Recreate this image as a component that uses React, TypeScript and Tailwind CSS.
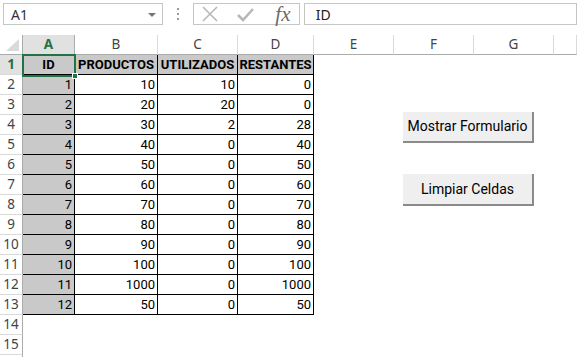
import React from "react";

const CELL_FONT = { fontFamily: "Roboto, 'Liberation Sans', sans-serif" };
const UI_FONT = { fontFamily: "'Noto Sans', 'Open Sans', sans-serif" };

const data: (string | number)[][] = [
  ["ID", "PRODUCTOS", "UTILIZADOS", "RESTANTES"],
  [1, 10, 10, 0],
  [2, 20, 20, 0],
  [3, 30, 2, 28],
  [4, 40, 0, 40],
  [5, 50, 0, 50],
  [6, 60, 0, 60],
  [7, 70, 0, 70],
  [8, 80, 0, 80],
  [9, 90, 0, 90],
  [10, 100, 0, 100],
  [11, 1000, 0, 1000],
  [12, 50, 0, 50],
];

const letters = ["A", "B", "C", "D", "E", "F", "G", ""];

function FormulaBar() {
  return (
    <div className="flex h-[35px] items-start pt-[3px] pl-[3px] bg-white">
      <div className="relative flex h-[22px] w-[164px] items-center border border-[#c6c6c6] bg-white pl-[7px] text-[14px] text-[#333]" style={UI_FONT}>
        A1
        <div className="absolute right-[6px] top-[9px] h-0 w-0 border-l-[4px] border-r-[4px] border-t-[4px] border-l-transparent border-r-transparent border-t-[#777]" />
      </div>
      <div className="flex h-[22px] w-[31px] flex-col items-center justify-center gap-[3px]">
        <div className="h-[2px] w-[2px] bg-[#999]" />
        <div className="h-[2px] w-[2px] bg-[#999]" />
        <div className="h-[2px] w-[2px] bg-[#999]" />
      </div>
      <div className="flex h-[22px] w-[109px] items-center border border-[#c6c6c6] bg-white">
        <svg width="16" height="16" viewBox="0 0 16 16" className="ml-[8px]">
          <path d="M1 1 L15 15 M15 1 L1 15" stroke="#b8b8b8" strokeWidth="1.6" fill="none" />
        </svg>
        <svg width="17" height="15" viewBox="0 0 17 15" className="ml-[19px]">
          <path d="M1 8 L6 13 L16 2" stroke="#b8b8b8" strokeWidth="2.6" fill="none" />
        </svg>
        <span className="ml-[21px] text-[21px] italic leading-none text-[#6a6a6a]" style={{ fontFamily: "'Liberation Serif', serif" }}>
          fx
        </span>
      </div>
      <div className="ml-[4px] flex h-[22px] w-[280px] items-center border border-[#c6c6c6] bg-white pl-[11px] text-[14px] text-[#222]" style={UI_FONT}>
        ID
      </div>
    </div>
  );
}

function Sheet() {
  const rows = 16;
  return (
    <div className="relative">
      <div className="grid grid-cols-[23px_52px_83px_80px_76px_80px_80px_80px_23px] auto-rows-[20px]">
        <div className="relative border-b border-r border-[#ababab] bg-white">
          <div className="absolute bottom-[3px] right-[3px] h-0 w-0 border-b-[12px] border-l-[13px] border-b-[#dadada] border-l-transparent" />
        </div>
        {letters.map((l, i) => (
          <div
            key={"h" + i}
            className={
              "flex items-center justify-center border-b border-[#ababab] text-[13.5px] " +
              (i === 0 ? "bg-[#e1e1e1] font-bold text-[#217346] border-r border-r-[#ababab]" : "bg-white text-[#444] border-r border-r-[#dadada]")
            }
            style={UI_FONT}
          >
            {l}
          </div>
        ))}
        {Array.from({ length: rows }).map((_, r) => {
          const rowData = data[r];
          return (
            <React.Fragment key={"r" + r}>
              <div
                className={
                  "flex items-center justify-center border-r border-r-[#ababab] border-b border-b-[#dadada] text-[13.5px] " +
                  (r === 0 ? "bg-[#e1e1e1] font-bold text-[#217346]" : "bg-white text-[#444]")
                }
                style={UI_FONT}
              >
                {r < 15 ? r + 1 : ""}
              </div>
              {Array.from({ length: 8 }).map((__, c) => {
                if (rowData && c < 4) {
                  const gray = r === 0 || c === 0;
                  return (
                    <div
                      key={c}
                      className={
                        "flex items-center overflow-visible whitespace-nowrap border-b border-r border-black text-[13px] text-black " +
                        (gray ? "bg-[#c9c9c9] " : "bg-white ") +
                        (r === 0 ? "justify-center font-bold" : "justify-end pr-[2px]")
                      }
                      style={CELL_FONT}
                    >
                      {rowData[c]}
                    </div>
                  );
                }
                return <div key={c} className="bg-white" />;
              })}
            </React.Fragment>
          );
        })}
      </div>
      <div className="pointer-events-none absolute left-[22px] top-[19px] h-[23px] w-[54px] border-2 border-[#217346]" />
      <div className="pointer-events-none absolute left-[72px] top-[38px] h-[6px] w-[6px] border border-white bg-[#217346]" />
      <button
        className="absolute left-[403px] top-[77px] flex h-[31px] w-[131px] items-center justify-center border-b-2 border-r-2 border-b-[#8a8a8a] border-r-[#8a8a8a] bg-[#efefef] text-[14px] text-black"
        style={CELL_FONT}
      >
        Mostrar Formulario
      </button>
      <button
        className="absolute left-[403px] top-[139px] flex h-[32px] w-[131px] items-center justify-center border-b-2 border-r-2 border-b-[#8a8a8a] border-r-[#8a8a8a] bg-[#efefef] text-[14px] text-black"
        style={CELL_FONT}
      >
        Limpiar Celdas
      </button>
    </div>
  );
}

export default function App() {
  return (
    <div className="h-[357px] w-[577px] overflow-hidden bg-white">
      <FormulaBar />
      <Sheet />
    </div>
  );
}
